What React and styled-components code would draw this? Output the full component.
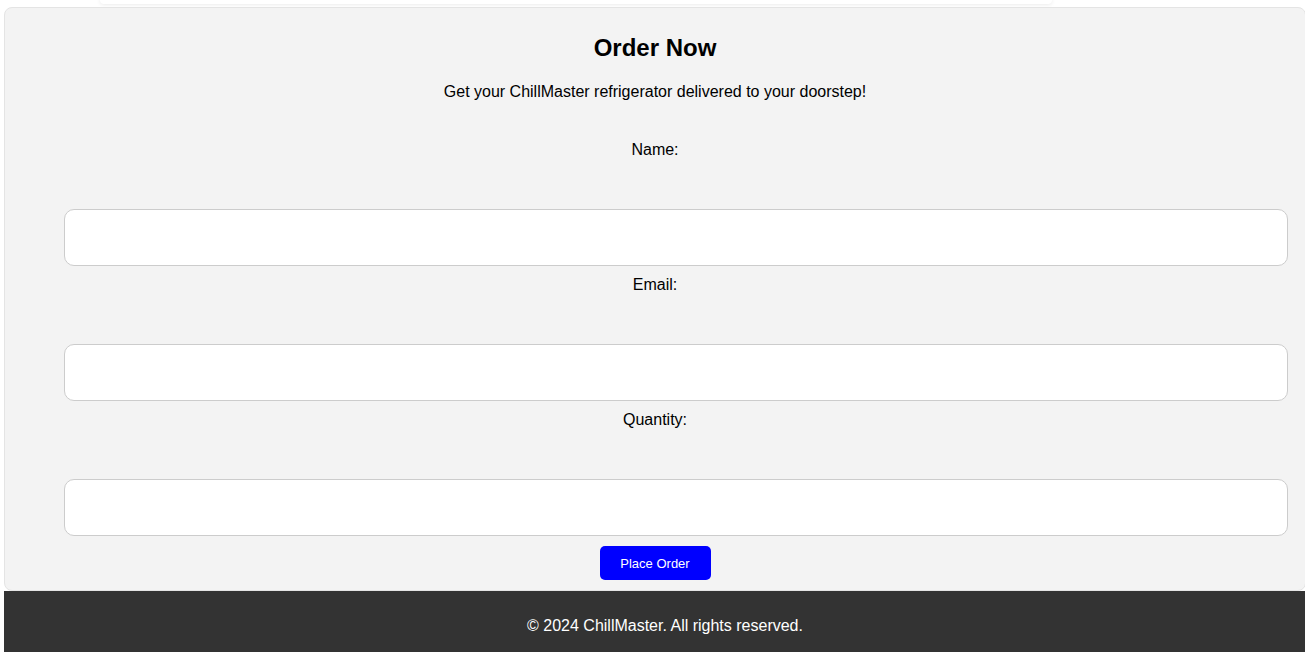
import React from "react";
import styled, { createGlobalStyle } from "styled-components";

const GlobalStyle = createGlobalStyle`
  html, body {
    margin: 0;
    overflow: hidden;
    background: #ffffff;
    font-family: "Liberation Sans", Arial, sans-serif;
    color: #000000;
  }
`;

const Page = styled.div`
  display: flex;
  flex-direction: column;
  align-items: flex-start;
`;

const PrevCard = styled.div`
  margin-left: 100px;
  width: 952px;
  height: 4px;
  background: #ffffff;
  border-radius: 0 0 10px 10px;
  box-shadow: 0 0 4px rgba(0, 0, 0, 0.12);
`;

const OrderSection = styled.section`
  margin: 3px 0 0 4px;
  width: 1302px;
  box-sizing: border-box;
  padding: 26px 59px 10px;
  background: #f3f3f3;
  border: 1px solid #e4e4e4;
  border-radius: 8px;
  text-align: center;
`;

const Title = styled.h2`
  margin: 0;
  font-size: 24px;
  line-height: 28px;
  font-weight: bold;
`;

const Intro = styled.p`
  margin: 21px 0 0;
  font-size: 16px;
  line-height: 18px;
`;

const Form = styled.form`
  margin-top: 40px;
  display: flex;
  flex-direction: column;
  align-items: center;
`;

const Label = styled.label`
  font-size: 16px;
  line-height: 18px;
  margin-bottom: 50px;
`;

const Input = styled.input`
  align-self: flex-start;
  box-sizing: content-box;
  width: 100%;
  height: 15px;
  padding: 20px;
  margin: 0 0 10px;
  border: 1px solid #cccccc;
  border-radius: 10px;
  background: #ffffff;
  font-size: 16px;
  font-family: inherit;
`;

const SubmitButton = styled.button`
  height: 34px;
  padding: 0 20px;
  min-width: 111px;
  background: #0000ff;
  color: #ffffff;
  border: none;
  border-radius: 5px;
  font-family: inherit;
  font-size: 13px;
  cursor: pointer;
`;

const Footer = styled.footer`
  margin-left: 4px;
  width: 1302px;
  padding: 10px;
  background: #333333;
  color: #ffffff;
  text-align: center;

  p {
    margin: 16px 0;
    font-size: 16px;
    line-height: 18px;
  }
`;

export default function App() {
  return (
    <Page>
      <GlobalStyle />
      <PrevCard />
      <OrderSection>
        <Title>Order Now</Title>
        <Intro>Get your ChillMaster refrigerator delivered to your doorstep!</Intro>
        <Form onSubmit={e => e.preventDefault()}>
          <Label htmlFor="name">Name:</Label>
          <Input id="name" type="text" />
          <Label htmlFor="email">Email:</Label>
          <Input id="email" type="email" />
          <Label htmlFor="quantity">Quantity:</Label>
          <Input id="quantity" type="number" />
          <SubmitButton type="submit">Place Order</SubmitButton>
        </Form>
      </OrderSection>
      <Footer>
        <p>© 2024 ChillMaster. All rights reserved.</p>
      </Footer>
    </Page>
  );
}
